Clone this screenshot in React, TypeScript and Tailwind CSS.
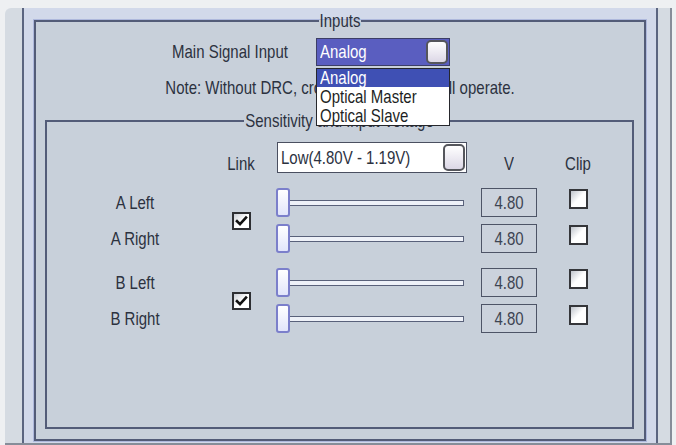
import React from "react";

// vertical stretch to mimic the tall, narrow text of the original capture
const txt = "inline-block scale-y-[1.18]";
const cols = "grid grid-cols-[176px_36px_215px_70px_68px]";

const CheckBox = ({ checked = false }: { checked?: boolean }) => (
  <div className="flex h-[18px] w-[19px] items-center justify-center border-2 border-[#2e2f33] bg-linear-to-br from-[#c9cdd4] via-white to-white">
    {checked && (
      <svg width="13" height="12" viewBox="0 0 13 12">
        <path d="M2 6.2 L5 9.2 L11 2.6" fill="none" stroke="#111" strokeWidth="2.6" strokeLinecap="square" />
      </svg>
    )}
  </div>
);

const ComboButton = ({ h }: { h: string }) => (
  <div className={`${h} w-[22px] rounded-[5px] border-2 border-[#55565c] bg-linear-to-b from-white to-[#dcd7e6]`} />
);

const Slider = () => (
  <div className="flex items-center pl-[17px]">
    <div className="z-[1] h-[29px] w-[14px] rounded-[3px] border-2 border-[#7b7fcb] bg-linear-to-b from-white to-[#e2e5fb]" />
    <div className="-ml-[2px] h-[6px] w-[176px] border border-[#59617a] bg-[#eef1f8]" />
  </div>
);

const Value = () => (
  <div className="mx-auto flex h-[29px] w-[56px] items-center justify-center border-[1.5px] border-[#4d5466] bg-[#cbd2dc] text-[#3d4452]">
    <span className={txt}>4.80</span>
  </div>
);

const Clip = () => (
  <div className="mx-auto mt-[1px] self-start">
    <div className="h-[20px] w-[19px] border-2 border-[#35363a] bg-linear-to-br from-[#bfc4cc] via-white to-white" />
  </div>
);

const Pair = ({ top, bottom }: { top: string; bottom: string }) => (
  <div className={`${cols} grid-rows-[29px_29px] items-center gap-y-[7px]`}>
    <div className="text-center">
      <span className={txt}>{top}</span>
    </div>
    <div className="row-span-2 flex justify-center">
      <CheckBox checked />
    </div>
    <Slider />
    <Value />
    <Clip />
    <div className="text-center">
      <span className={txt}>{bottom}</span>
    </div>
    <Slider />
    <Value />
    <Clip />
  </div>
);

export default function App() {
  return (
    <div className="h-[445px] w-[676px] overflow-hidden bg-[#eef0f2] pt-2 pl-[5px] pr-[4px] font-['Liberation_Sans',Arial,sans-serif] text-[15px] leading-[18px] text-[#2c323f]">
      <div className="h-full rounded-tl-[6px] border-r-2 border-b-2 border-[#868d99] bg-[#d5dbe2] pl-[17px] pr-[12px]">
        <div className="h-full border-x-2 border-[#5b6580] bg-[#d2d9ea] px-[10px] pt-[4px]">
          {/* Inputs group */}
          <fieldset className="h-[429px] border-2 border-[#535c78] bg-[#c8d0da] shadow-[0_0_0_1px_#aeb8dc]">
            <legend className="mx-auto px-[1px]">
              <span className={txt}>Inputs</span>
            </legend>

            <div className="mt-[8px] flex items-center pl-[136px]">
              <div className="w-[144px]">
                <span className={txt}>Main Signal Input</span>
              </div>
              <div className="relative flex h-[28px] w-[134px] items-center justify-between border border-[#3c3e66] bg-[#5a5ec0] pl-[3px] pr-[1px] text-white">
                <span className={txt}>Analog</span>
                <ComboButton h="h-[24px]" />
                {/* open list */}
                <div className="absolute top-[29px] left-[-1px] z-10 w-[134px] border border-[#26272c] bg-white text-[#1d1f24]">
                  <div className="h-[18px] bg-[#3f50b4] pl-[3px] text-white">
                    <span className={txt}>Analog</span>
                  </div>
                  <div className="h-[19px] pl-[3px] pt-[1px]">
                    <span className={txt}>Optical Master</span>
                  </div>
                  <div className="h-[19px] pl-[3px] pt-[1px]">
                    <span className={txt}>Optical Slave</span>
                  </div>
                </div>
              </div>
            </div>

            <div className="mt-[13px] text-center">
              <span className={txt}>Note: Without DRC, crossover channels will operate.</span>
            </div>

            {/* Sensitivity group */}
            <fieldset className="mt-[15px] mr-[10px] ml-[9px] h-[317px] border-2 border-[#535c78]">
              <legend className="mx-auto px-[1px]">
                <span className={txt}>Sensitivity and Input Voltage</span>
              </legend>

              <div className={`${cols} mt-[12px] h-[31px] items-end`}>
                <div />
                <div className="text-center">
                  <span className={txt}>Link</span>
                </div>
                <div className="pl-[18px]">
                  <div className="flex h-[31px] w-[190px] items-center justify-between border border-[#4a4f60] bg-white pl-[3px] pr-[1px]">
                    <span className={txt}>Low(4.80V - 1.19V)</span>
                    <ComboButton h="h-[27px]" />
                  </div>
                </div>
                <div className="text-center">
                  <span className={txt}>V</span>
                </div>
                <div className="text-center">
                  <span className={txt}>Clip</span>
                </div>
              </div>

              <div className="mt-[15px] flex flex-col gap-[15px]">
                <Pair top="A Left" bottom="A Right" />
                <Pair top="B Left" bottom="B Right" />
              </div>
            </fieldset>
          </fieldset>
        </div>
      </div>
    </div>
  );
}
